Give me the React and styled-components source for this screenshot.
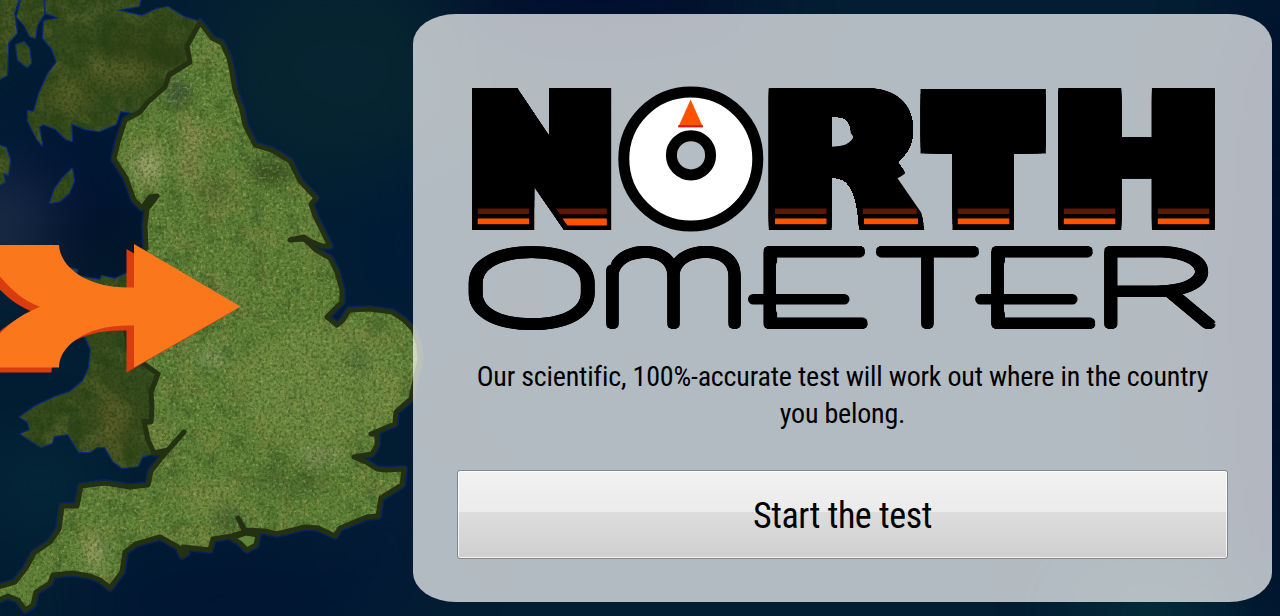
import React from 'react';
import styled, { createGlobalStyle } from 'styled-components';

const GlobalStyle = createGlobalStyle`
  * { box-sizing: border-box; }
  body { margin: 0; background: #03182b; overflow: hidden; }
`;

const Page = styled.main`
  position: relative;
  display: flex;
  justify-content: flex-end;
  width: 1280px;
  height: 616px;
  padding: 14px 8.5px 14px 0;
  overflow: hidden;
  color: #000;
  font-family: 'Roboto Condensed', Roboto, 'Liberation Sans', sans-serif;
  font-stretch: 75%;
`;

const MapArt = styled.svg`
  position: absolute;
  inset: 0;
  width: 1280px;
  height: 616px;
  filter { color-interpolation-filters: sRGB; }
`;

const Panel = styled.section`
  position: relative;
  display: flex;
  flex-direction: column;
  width: 858.5px;
  height: 588px;
  padding: 50px 43.5px 0 44px;
  border-radius: 5%;
  background: rgba(255, 255, 255, 0.7);
`;

const Logo = styled.svg`
  display: block;
  width: 771px;
  height: 276px;
  overflow: visible;
`;

const Heavy = styled.text`
  font-family: Inter, sans-serif;
  font-weight: 900;
  font-stretch: 100%;
  font-size: 100px;
`;

const Thin = styled.text`
  font-family: ${(p) => p.$family || 'Inter'}, sans-serif;
  font-weight: 100;
  font-stretch: 100%;
  font-size: 100px;
`;

const Intro = styled.p`
  margin: 18px 0 0;
  font-size: 28px;
  line-height: 37px;
  letter-spacing: -0.2px;
  text-align: center;
`;

const StartButton = styled.button`
  height: 89px;
  margin: 38px 0 0;
  padding: 3px 0 0;
  border: 1px solid #85888b;
  border-radius: 3px;
  background: linear-gradient(#f2f2f2 0, #ebebeb 47%, #dddddd 47%, #cfcfcf 100%);
  box-shadow: inset 0 0 0 1px rgba(255, 255, 255, 0.75);
  font: inherit;
  font-stretch: 75%;
  font-size: 36px;
  letter-spacing: -0.45px;
  color: #000;
`;

const ENGLAND =
  'M200 22L206 30L212 38L222 43L229 58L232 72L235 90L242 110L245 125L255 145L272 150L290 161L300 181L316 198L311 204L315 216L322 230L330 246L322 246L310 241L304 237L290 240L304 239L316 250L330 258L337 272L342 290L342 302L327 317L337 325L343 320L349 310L370 309L392 312L404 320L413 329L419 345L420 360L415 380L411 399L396 412L395 424L378 431L371 434L377 434L377 445L372 454L354 457L366 462L377 469L386 470L404 469L402 485L381 498L378 516L367 517L340 528L335 536L318 528L305 527L277 534L265 531L245 530L238 518L245 532L232 536L213 539L210 550L183 547L187 553L182 556L178 547L160 537L136 544L125 552L122 572L110 588L100 580L90 576L72 573L53 575L50 583L36 592L33 605L25 610L18 600L8 596L-6 602V588L15 582L26 568L34 553L50 542L59 529L62 506L77 506L81 486L105 483L130 487L148 485L151 471L162 457L184 432L168 450L154 453L148 440L144 421L151 422L152 408L151 392L158 374L144 364L130 358L124 320L130 285L134 272L146 248L145 225L147 209L157 196L150 197L142 208L134 200L126 178L114 159L118 142L125 120L140 112L148 102L165 87L169 75L190 62L187 46Z';

const WIGHT = 'M232 538L246 533L258 535L256 545L247 550L240 543Z';

const WALES =
  'M70 268L77 270L76 276L100 280L102 276L115 279L135 270L160 300L146 362L158 374L151 392L152 408L151 422L144 421L148 440L154 453L142 457L138 466L122 468L113 461L105 447L97 447L90 452L79 452L74 444L68 434L54 436L52 443L41 447L30 440L21 434L30 430L28 422L20 417L34 407L55 397L70 392L83 381L89 368L91 350L86 338L70 325L58 310L90 296Z';

const SCOTLAND =
  'M45 -4H141L139 6L116 10L142 16L157 9L168 7L184 17L200 22L187 46L190 62L169 75L165 87L148 102L134 113L120 111L116 124L99 131L85 129L71 123L72 141L66 139L56 129L43 124L39 127L42 145L37 139L28 121L28 111L34 112L39 94L48 74L57 62L52 49L43 38L44 21L60 18L46 13Z';

const ISLES =
  'M-4 -4H20L14 13L17 33L8 43L7 75L-4 81ZM22 -4H43L44 14L37 25L35 38L30 36L25 26L17 17ZM16 45L24 42L29 48L31 63L27 67L18 60ZM-4 144L6 148L10 160L8 175L3 173L5 182L-4 187ZM72 169L74 181L69 193L60 201L50 203L55 189L62 179Z';

const ARROW =
  'M-9 245H59C60 266 85 287.5 128 287.5H134V244L240.5 306.5L134 367.5V325.5H128C84 325.5 59 347 59 367.5H-9V345C4 326 20 315 40 306.7C22 300 8 288 -9 265Z';

const Patch = ({ x, y, rx, ry, fill, o }) => (
  <ellipse cx={x} cy={y} rx={rx} ry={ry} fill={fill} opacity={o} filter="url(#soft)" />
);

const Map = () => (
  <MapArt viewBox="0 0 1280 616" aria-hidden="true">
    <defs>
      <filter id="soft" x="-100%" y="-100%" width="300%" height="300%"><feGaussianBlur stdDeviation="8" /></filter>
      <filter id="haze" x="-20%" y="-20%" width="140%" height="140%"><feGaussianBlur stdDeviation="36" /></filter>
      <filter id="grain" x="0" y="0" width="100%" height="100%">
        <feTurbulence type="fractalNoise" baseFrequency="0.34" numOctaves="3" seed="4" />
        <feColorMatrix values="0 0 0 0 0.14  0 0 0 0 0.24  0 0 0 0 0.06  3.2 0 0 0 -1.35" />
      </filter>
      <filter id="fields" x="0" y="0" width="100%" height="100%">
        <feTurbulence type="fractalNoise" baseFrequency="0.3" numOctaves="3" seed="21" />
        <feColorMatrix values="0 0 0 0 0.72  0 0 0 0 0.74  0 0 0 0 0.46  0 5 0 0 -2.9" />
      </filter>
      <filter id="moor" x="0" y="0" width="100%" height="100%">
        <feTurbulence type="fractalNoise" baseFrequency="0.04" numOctaves="5" seed="9" />
        <feColorMatrix values="0 0 0 0 0.52  0 0 0 0 0.53  0 0 0 0 0.28  0 0 4 0 -1.9" />
      </filter>
      <filter id="wood" x="0" y="0" width="100%" height="100%">
        <feTurbulence type="fractalNoise" baseFrequency="0.06" numOctaves="5" seed="33" />
        <feColorMatrix values="0 0 0 0 0.12  0 0 0 0 0.24  0 0 0 0 0.08  5 0 0 0 -2.6" />
      </filter>
      <clipPath id="england"><path d={ENGLAND} /></clipPath>
      <clipPath id="outer"><path d={WALES + SCOTLAND + ISLES} /></clipPath>
    </defs>
    <rect width="1280" height="616" fill="#031d32" />
    <g filter="url(#haze)">
      <ellipse cx="340" cy="70" rx="130" ry="110" fill="#062431" />
      <ellipse cx="70" cy="170" rx="70" ry="70" fill="#001536" />
      <ellipse cx="0" cy="222" rx="50" ry="36" fill="#2a3650" />
      <ellipse cx="100" cy="240" rx="50" ry="30" fill="#000c20" />
      <ellipse cx="400" cy="250" rx="60" ry="90" fill="#001c36" />
      <ellipse cx="40" cy="485" rx="50" ry="30" fill="#04303e" />
      <ellipse cx="230" cy="600" rx="150" ry="50" fill="#001533" />
      <ellipse cx="390" cy="540" rx="40" ry="60" fill="#041a38" />
      <ellipse cx="1275" cy="300" rx="60" ry="330" fill="#000f2c" />
      <ellipse cx="1150" cy="612" rx="80" ry="24" fill="#07383f" />
      <ellipse cx="600" cy="0" rx="160" ry="40" fill="#020b2c" />
    </g>
    <g fill="none" stroke="#0b2a7c" strokeLinejoin="round">
      <path d={WALES + SCOTLAND + ISLES} strokeWidth="2.6" opacity=".95" />
      <path d={ENGLAND + WIGHT} strokeWidth="8" opacity=".55" />
    </g>
    <path d={WALES + SCOTLAND + ISLES} fill="#374b1d" />
    <g clipPath="url(#outer)">
      <rect width="420" height="616" filter="url(#moor)" opacity=".25" />
      <rect width="420" height="616" filter="url(#wood)" opacity=".45" />
      <Patch x={150} y={50} rx={40} ry={22} fill="#2b3c12" o={0.6} />
      <Patch x={120} y={72} rx={36} ry={12} fill="#6f6c34" o={0.65} />
      <Patch x={70} y={95} rx={22} ry={16} fill="#67682f" o={0.6} />
      <Patch x={112} y={425} rx={14} ry={40} fill="#6e652f" o={0.6} />
      <rect width="420" height="616" filter="url(#grain)" opacity=".6" />
    </g>
    <path d={ENGLAND + WIGHT} fill="#61833a" />
    <g clipPath="url(#england)">
      <rect width="430" height="616" filter="url(#moor)" opacity=".4" />
      <rect width="430" height="616" filter="url(#wood)" opacity=".22" />
      <Patch x={148} y={165} rx={14} ry={18} fill="#b3af7c" o={0.75} />
      <Patch x={190} y={155} rx={12} ry={38} fill="#98915a" o={0.6} />
      <Patch x={178} y={92} rx={11} ry={12} fill="#2e4034" o={0.85} />
      <Patch x={272} y={172} rx={22} ry={10} fill="#34451f" o={0.9} />
      <Patch x={215} y={190} rx={10} ry={18} fill="#5b542e" o={0.5} />
      <Patch x={320} y={385} rx={85} ry={60} fill="#7f934c" o={0.5} />
      <Patch x={210} y={500} rx={30} ry={20} fill="#84914c" o={0.5} />
      <Patch x={96} y={552} rx={6} ry={18} fill="#b5b17d" o={0.95} />
      <Patch x={318} y={457} rx={24} ry={6} fill="#b0b283" o={0.7} />
      <Patch x={290} y={480} rx={40} ry={14} fill="#41602a" o={0.5} />
      <Patch x={228} y={518} rx={14} ry={8} fill="#34482a" o={0.7} />
      <Patch x={358} y={362} rx={9} ry={8} fill="#2f4a30" o={0.7} />
      <Patch x={212} y={358} rx={12} ry={8} fill="#a5ae8c" o={0.6} />
      <rect width="430" height="616" filter="url(#grain)" opacity=".42" />
      <rect width="430" height="616" filter="url(#fields)" opacity=".38" />
    </g>
    <path d={ENGLAND + WIGHT} fill="none" stroke="#233012" strokeWidth="5" strokeLinejoin="round" />
    <path d={ARROW} transform="translate(-7.5 5)" fill="#da3c10" />
    <path d={ARROW} fill="#fa781b" />
  </MapArt>
);

// Thickens a glyph by overlaying shifted clones of it.
const Spread = ({ id, offsets, inner, outer, children }) => (
  <g clipPath={outer}>
    <g id={id} clipPath={inner}>{children}</g>
    {offsets.map(([dx, dy], i) => (
      <use key={i} href={`#${id}`} transform={`translate(${dx} ${dy})`} />
    ))}
  </g>
);

const box = (rx, ry) => {
  const steps = [-1, -0.75, -0.5, -0.25, 0, 0.25, 0.5, 0.75, 1];
  return steps.flatMap((a) => (ry ? steps : [0]).map((b) => [a * rx, b * ry]));
};

const ring = (rx, ry) => {
  const turn = (n, k) =>
    Array.from({ length: n }, (_, i) => {
      const t = (i / n) * Math.PI * 2;
      return [Math.cos(t) * rx * k, Math.sin(t) * ry * k];
    });
  return [...turn(24, 1), ...turn(16, 0.75), ...turn(12, 0.5), ...turn(8, 0.25)];
};

const Bold = ({ id, x, y, sx, sy, rx, ry, trim, children }) => (
  <Spread id={id} offsets={box(rx, ry)} outer={trim}>
    <Heavy transform={`translate(${x} ${y}) scale(${sx} ${sy})`}>{children}</Heavy>
  </Spread>
);

const Line = ({ id, x, sx, sy = 1.018, r = 4, clip, family, children }) => (
  <Spread id={id} offsets={ring(r, 4.3)} inner={clip}>
    <Thin $family={family} transform={`translate(${x} 324.5) scale(${sx} ${sy})`}>{children}</Thin>
  </Spread>
);

const Stripes = ({ x, w, slant = 0 }) => (
  <g>
    <rect x={x - slant} y="208.5" width={w} height="5.5" fill="#5f1508" />
    <rect x={x} y="218.5" width={w} height="5.7" fill="#ff5200" />
  </g>
);

const Wordmark = () => (
  <Logo viewBox="457 64 771 276" role="img" aria-label="Northometer">
    <defs>
      <clipPath id="notchN">
        <path clipRule="evenodd" d="M460 80H630V240H460ZM516.5 80V88H517L549 135.5V80ZM534.3 187V240H571Z" />
      </clipPath>
      <clipPath id="notchR">
        <path clipRule="evenodd" d="M760 88.2H868C895 88.2 913 103 913 129C913 145 907 154 897.5 162C912 180 921 203 924.5 230V240H760ZM831.8 117H838C855 117 855 145 838 145H831.8ZM831.8 178H836C853 179 858 203 859.3 230H831.8Z" />
      </clipPath>
      <clipPath id="shoulder"><path clipRule="evenodd" d="M590 235H760V335H590ZM600 236H617V262H615V269H600Z" /></clipPath>
      <clipPath id="frame1"><path d="M730 240H900V262H772V313H900V335H730Z" /></clipPath>
      <clipPath id="frame2"><path d="M960 240H1120V262H999.7V313H1120V335H960Z" /></clipPath>
    </defs>
    <Bold id="n" x={479.9} y={230.3} sx={1.6} sy={1.95} rx={15.5} ry={0} trim="url(#notchN)">N</Bold>
    <Bold id="r" x={767.4} y={223.7} sx={2.265} sy={1.82} rx={9.2} ry={6} trim="url(#notchR)">R</Bold>
    <Bold id="t" x={932.8} y={208} sx={1.47} sy={1.346} rx={16.3} ry={21.5}>T</Bold>
    <Bold id="h" x={1060.1} y={223.3} sx={2.04} sy={1.777} rx={11.3} ry={6.3}>H</Bold>
    <circle cx="690.8" cy="159" r="67" fill="#fff" stroke="#000" strokeWidth="11" />
    <circle cx="691" cy="155.3" r="19.6" fill="#b4bcc4" stroke="#000" strokeWidth="11" />
    <path d="M690.6 99.5L703 127.3H678.2Z" fill="#ff5200" />
    <rect x="678.2" y="125.2" width="24.8" height="2.1" fill="#c81e1e" />
    <Stripes x={477.7} w={51.5} />
    <path d="M556 208.5H606.8V214.2H560Z" fill="#5f1508" />
    <path d="M562.5 218.5H606.8V225.5H567.5Z" fill="#ff5200" />
    <Stripes x={775} w={51.5} />
    <Stripes x={864} w={54} slant={1.3} />
    <Stripes x={957.8} w={51.5} />
    <Stripes x={1063.8} w={51.5} />
    <Stripes x={1157.8} w={51.5} />
    <Line id="o2" x={458.4} sx={2.2} family="Roboto">O</Line>
    <Line id="m2" x={592.2} sx={1.878} sy={1.34} clip="url(#shoulder)">m</Line>
    <Line id="e2" x={740.4} sx={2.405} clip="url(#frame1)">E</Line>
    <Line id="t2" x={868} sx={1.93}>T</Line>
    <Line id="e3" x={968.1} sx={2.405} clip="url(#frame2)">E</Line>
    <Line id="r2" x={1082.5} sx={2.275}>R</Line>
    <path d="M753.2 299.2H844.3M980.4 299.2H1072.3" stroke="#000" strokeWidth="10.5" strokeLinecap="round" />
  </Logo>
);

export default function App() {
  return (
    <Page>
      <GlobalStyle />
      <Map />
      <Panel>
        <Wordmark />
        <Intro>Our scientific, 100%-accurate test will work out where in the country you belong.</Intro>
        <StartButton type="button">Start the test</StartButton>
      </Panel>
    </Page>
  );
}
